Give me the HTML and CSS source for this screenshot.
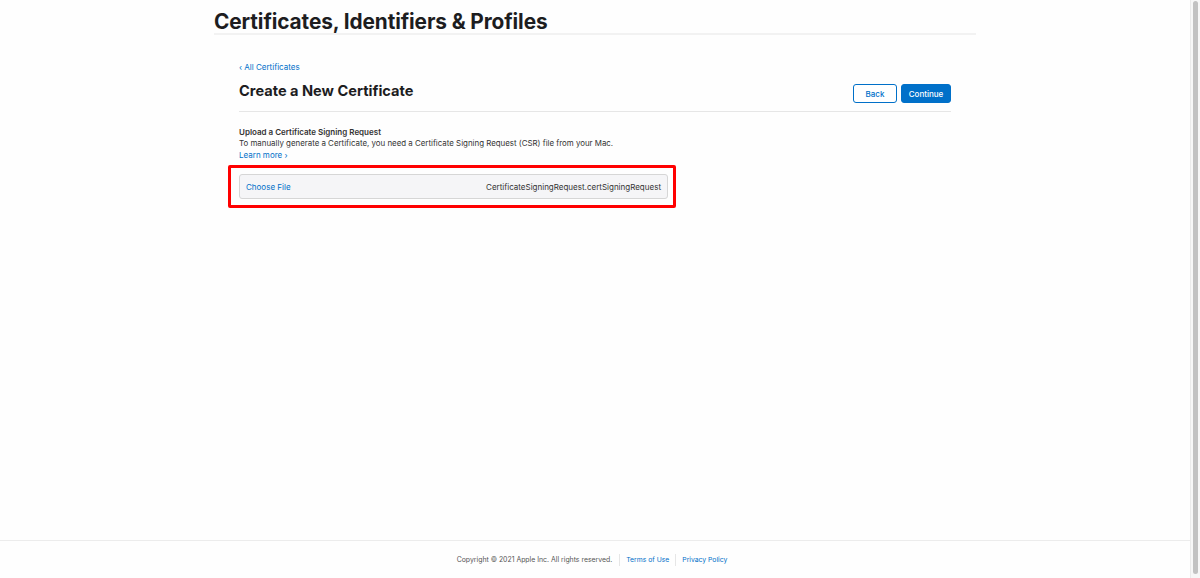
FILE: index.html
```html
<!DOCTYPE html>
<html lang="en">
<head>
<meta charset="utf-8">
<title>Certificates, Identifiers &amp; Profiles</title>
<link rel="stylesheet" href="styles.css">
</head>
<body>
<div class="viewport">
  <main class="main">
    <header class="page-header">
      <h1 class="page-title">Certificates, Identifiers &amp; Profiles</h1>
    </header>
    <section class="panel">
      <a class="back-link" href="#">‹ All Certificates</a>
      <div class="panel-head">
        <h2 class="panel-title">Create a New Certificate</h2>
        <div class="actions">
          <button class="btn btn-secondary">Back</button>
          <button class="btn btn-primary">Continue</button>
        </div>
      </div>
      <div class="upload">
        <h3 class="upload-title">Upload a Certificate Signing Request</h3>
        <p class="upload-desc">To manually generate a Certificate, you need a Certificate Signing Request (CSR) file from your Mac.</p>
        <a class="learn-more" href="#">Learn more ›</a>
        <div class="highlight">
          <div class="file-field">
            <span class="choose">Choose File</span>
            <span class="file-name">CertificateSigningRequest.certSigningRequest</span>
          </div>
        </div>
      </div>
    </section>
  </main>
  <footer class="footer">
    <span class="copy">Copyright © 2021 Apple Inc. All rights reserved.</span>
    <a class="foot-link" href="#">Terms of Use</a>
    <a class="foot-link" href="#">Privacy Policy</a>
  </footer>
</div>
<div class="scrollbar"><div class="thumb"></div></div>
</body>
</html>
```
FILE: styles.css
```css
* { box-sizing: border-box; }

html, body {
  margin: 0;
  height: 100%;
  background: #fefefe;
  font-family: Inter, "Noto Sans", "Liberation Sans", sans-serif;
  color: #1d1d1f;
}

a { text-decoration: none; color: #0070c9; }

.viewport {
  width: 1190px;
  min-height: 100vh;
  display: flex;
  flex-direction: column;
}

.main { flex: 1; }

/* page heading with its hairline rule */
.page-header {
  width: 762px;
  margin: 0 auto;
  padding-top: 10px;
  border-bottom: 2px solid #f2f2f2;
}

.page-title {
  margin: 0;
  font-size: 20.8px;
  font-weight: 700;
  line-height: 23px;
  letter-spacing: -0.1px;
}

.panel {
  width: 712px;
  margin: 0 auto;
  padding-top: 27px;
}

.back-link {
  display: block;
  font-size: 8px;
  line-height: 10px;
}

.panel-head {
  display: flex;
  justify-content: space-between;
  align-items: flex-start;
  padding-top: 12px;
  padding-bottom: 8px;
  border-bottom: 1px solid #e6e6e6;
}

.panel-title {
  margin: -2px 0 0;
  font-size: 14.6px;
  line-height: 18px;
  font-weight: 700;
}

.actions { display: flex; gap: 4px; }

.btn {
  font-family: inherit;
  font-size: 8px;
  font-weight: 500;
  height: 19px;
  border-radius: 3px;
  padding: 0;
  cursor: pointer;
}

.btn-secondary {
  width: 44px;
  background: #fff;
  color: #0070c9;
  border: 1px solid #0070c9;
}

.btn-primary {
  width: 50px;
  background: #0070c9;
  color: #fff;
  border: 1px solid #0070c9;
}

.upload { padding-top: 15px; }

.upload-title {
  margin: 0;
  font-size: 8px;
  line-height: 11px;
  font-weight: 600;
  color: #333;
}

.upload-desc {
  margin: 0;
  font-size: 7.9px;
  line-height: 11px;
  color: #333;
}

.learn-more {
  display: block;
  font-size: 8px;
  line-height: 13px;
}

/* red annotation frame around the file picker */
.highlight {
  width: 448px;
  margin-left: -11px;
  margin-top: 3px;
  padding: 6px 5px 6px 8px;
  border: 3px solid #f00;
  border-radius: 2px;
}

.file-field {
  display: flex;
  justify-content: space-between;
  align-items: center;
  height: 25px;
  padding: 0 6px;
  background: #f5f5f7;
  border: 1px solid #d6d6d6;
  border-radius: 3px;
  font-size: 8px;
}

.choose { color: #0070c9; }
.file-name { color: #333; }

.footer {
  height: 38px;
  border-top: 1px solid #ececec;
  display: flex;
  justify-content: center;
  align-items: center;
  font-size: 6.8px;
}

.copy { color: #555; padding-right: 7px; font-size: 6.9px; }

.foot-link {
  color: #0070c9;
  padding: 0 6px;
  border-left: 1px solid #e6e6e6;
  line-height: 12px;
}

/* window scrollbar */
.scrollbar {
  position: fixed;
  top: 0;
  right: 0;
  width: 10px;
  height: 100%;
  background: #f7f7f7;
  border-left: 1px solid #ebebeb;
}

.thumb {
  position: absolute;
  top: 1px;
  bottom: 4px;
  left: 2px;
  width: 5px;
  border-radius: 3px;
  background: #c2c2c2;
}
```
